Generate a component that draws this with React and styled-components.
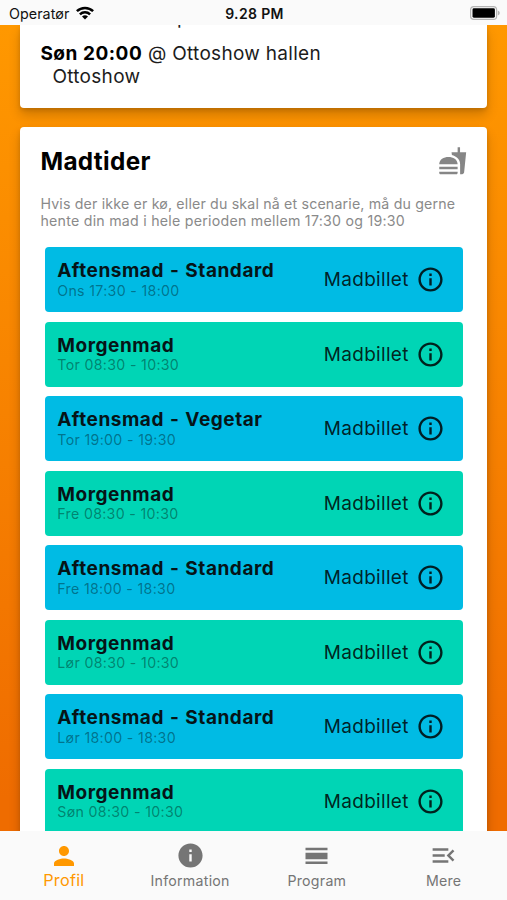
import React from 'react';
import styled, { createGlobalStyle } from 'styled-components';
import { MdInfoOutline, MdPerson, MdInfo, MdMenuOpen } from 'react-icons/md';

const GlobalStyle = createGlobalStyle`
  * { box-sizing: border-box; }
  body { margin: 0; overflow: hidden; font-family: Inter, "Liberation Sans", sans-serif; }
`;

const Screen = styled.div`
  display: flex;
  flex-direction: column;
  width: 507px;
  height: 900px;
  overflow: hidden;
  background: #fafafa;
`;

const StatusBar = styled.header`
  display: grid;
  grid-template-columns: 1fr auto 1fr;
  align-items: center;
  flex: none;
  height: 25px;
  padding: 3px 7px 0 9px;
  color: #111;
  font-size: 14.3px;
  line-height: 20px;
`;

const Carrier = styled.div`
  display: flex;
  align-items: center;
  gap: 7px;
  letter-spacing: 0.05px;
`;

const Clock = styled.div`
  font-weight: 600;
  font-size: 14px;
  letter-spacing: 0.35px;
`;

const StatusIcon = styled.svg`
  display: block;
  justify-self: end;
  margin-top: -2px;
`;

const Content = styled.main`
  flex: none;
  height: 806px;
  overflow: hidden;
  padding: 0 19.6px 0 20.4px;
  background: linear-gradient(#ff9800, #ef6c00 96%);
`;

const Card = styled.section`
  background: #fff;
  border-radius: 4px;
  box-shadow: 0 7px 12px rgba(0, 0, 0, 0.19), 0 2px 4px rgba(0, 0, 0, 0.12);
  padding: 0 20px;
`;

const ShowCard = styled(Card)`
  display: flow-root;
  height: 82.5px;
  border-radius: 0 0 4px 4px;
  margin-bottom: 19.1px;
  font-size: 19px;
  line-height: 23px;
  color: #1c1c1c;
`;

const ClippedLine = styled.div`
  height: 17px;
  padding-left: 136.5px;
  line-height: 17px;
  margin-top: -16px;
  margin-bottom: 16px;
`;

const ShowLine = styled.div`
  letter-spacing: 0.3px;
  padding-left: ${(p) => p.$indent || 0}px;
  white-space: nowrap;
`;

const Strong = styled.b`
  font-weight: 700;
  color: #000;
  letter-spacing: 0.52px;
`;

const MealCard = styled(Card)`
  height: 760px;
`;

const CardHeader = styled.div`
  display: flex;
  justify-content: space-between;
  align-items: center;
  height: 68.5px;
  color: #868686;
`;

const Title = styled.h2`
  margin: 0;
  color: #000;
  font-size: 24.3px;
  line-height: 30px;
  font-weight: 700;
  letter-spacing: 0.35px;
`;

const Hint = styled.p`
  margin: 0 0 18px;
  font-size: 14.2px;
  line-height: 17px;
  color: #8a8a8a;
`;

const HintLine = styled.span`
  display: block;
  white-space: nowrap;
  letter-spacing: ${(p) => p.$spacing}px;
`;

const MealList = styled.div`
  display: flex;
  flex-direction: column;
  gap: 9.5px;
  padding: 0 4px 0 4.3px;
`;

const MealRow = styled.div`
  display: flex;
  justify-content: space-between;
  align-items: center;
  height: 65px;
  padding: 0 18.7px 0 12.6px;
  border-radius: 4px;
  background: ${(p) => (p.$dinner ? '#00bbe4' : '#00d5b5')};
`;

const MealName = styled.div`
  font-size: 19px;
  line-height: 21.5px;
  font-weight: 700;
  letter-spacing: 0.55px;
  word-spacing: 0.9px;
  color: #061417;
`;

const MealTime = styled.div`
  font-size: 14.2px;
  line-height: 17px;
  letter-spacing: 0.3px;
  word-spacing: 0.1px;
  color: rgba(0, 0, 0, 0.4);
`;

const Ticket = styled.div`
  display: flex;
  align-items: center;
  gap: 7px;
  font-size: 19px;
  letter-spacing: 0.3px;
  color: rgba(0, 0, 0, 0.84);
`;

const NavBar = styled.nav`
  display: grid;
  grid-template-columns: repeat(4, 1fr);
  flex: 1;
  background: #fafafa;
`;

const NavItem = styled.div`
  display: flex;
  flex-direction: column;
  align-items: center;
  padding-top: 10px;
  padding-left: ${(p) => (p.$active ? 1 : 0)}px;
  color: ${(p) => (p.$active ? '#ff9800' : '#757575')};
`;

const NavLabel = styled.span`
  margin-top: ${(p) => (p.$active ? -1 : 1)}px;
  font-size: ${(p) => (p.$active ? 16.2 : 14.2)}px;
  line-height: 20px;
  letter-spacing: 0.25px;
`;

const FastfoodIcon = ({ size }) => (
  <svg width={size} height={size} viewBox="0 0 24 24" fill="currentColor">
    <path d="M18.06 22.99h1.66c.84 0 1.53-.64 1.63-1.46L23 5.05h-5V1h-1.97v4.05h-4.97l.3 2.34c1.71.47 3.31 1.32 4.27 2.26 1.44 1.42 2.43 2.89 2.43 5.29v8.05zM1 21.99V21h15.03v.99c0 .55-.45 1-1.01 1H2.01c-.56 0-1.01-.45-1.01-1zm15.03-7c0-8-15.03-8-15.03 0h15.03zM1.02 17h15v2h-15z" />
  </svg>
);

const DayIcon = ({ size }) => (
  <svg width={size} height={size} viewBox="0 0 29 29" fill="currentColor">
    <path d="M3.5 6.8h22v2.4h-22zM3.5 11.8h22v6.4h-22zM3.5 20.6h22V23h-22z" />
  </svg>
);

const meals = [
  ['Aftensmad - Standard', 'Ons 17:30 - 18:00', true],
  ['Morgenmad', 'Tor 08:30 - 10:30', false],
  ['Aftensmad - Vegetar', 'Tor 19:00 - 19:30', true],
  ['Morgenmad', 'Fre 08:30 - 10:30', false],
  ['Aftensmad - Standard', 'Fre 18:00 - 18:30', true],
  ['Morgenmad', 'Lør 08:30 - 10:30', false],
  ['Aftensmad - Standard', 'Lør 18:00 - 18:30', true],
  ['Morgenmad', 'Søn 08:30 - 10:30', false],
];

const tabs = [
  ['Profil', MdPerson, true],
  ['Information', MdInfo, false],
  ['Program', DayIcon, false],
  ['Mere', MdMenuOpen, false],
];

const Wifi = () => (
  <StatusIcon width="18" height="14" viewBox="0 0 18 14" fill="none" stroke="#000" strokeWidth="2.5">
    <path d="M0.9 5.2a11.6 11.6 0 0 1 16.2 0" />
    <path d="M3.9 8.4a7.4 7.4 0 0 1 10.2 0" />
    <path d="M9 13.6 6 10.6a4.3 4.3 0 0 1 6 0z" fill="#000" stroke="none" />
  </StatusIcon>
);

const Battery = () => (
  <StatusIcon width="30" height="14" viewBox="0 0 30 14">
    <rect x="0.6" y="0.6" width="26" height="12.8" rx="3.2" fill="#fafafa" stroke="#b5b5b5" strokeWidth="1.2" />
    <rect x="2.5" y="2.3" width="22.4" height="9.4" rx="1.4" fill="#000" />
    <path d="M27.8 4.6q2 .8 2 2.4t-2 2.4z" fill="#b5b5b5" />
  </StatusIcon>
);

export default function App() {
  return (
    <Screen>
      <GlobalStyle />
      <StatusBar>
        <Carrier>Operatør <Wifi /></Carrier>
        <Clock>9.28 PM</Clock>
        <Battery />
      </StatusBar>
      <Content>
        <ShowCard>
          <ClippedLine>p</ClippedLine>
          <ShowLine><Strong>Søn 20:00</Strong> @ Ottoshow hallen</ShowLine>
          <ShowLine $indent={12}>Ottoshow</ShowLine>
        </ShowCard>
        <MealCard>
          <CardHeader>
            <Title>Madtider</Title>
            <FastfoodIcon size={29.4} />
          </CardHeader>
          <Hint>
            <HintLine $spacing={0.17}>Hvis der ikke er kø, eller du skal nå et scenarie, må du gerne</HintLine>
            <HintLine $spacing={0.25}>hente din mad i hele perioden mellem 17:30 og 19:30</HintLine>
          </Hint>
          <MealList>
            {meals.map(([name, time, dinner]) => (
              <MealRow key={time} $dinner={dinner}>
                <div>
                  <MealName>{name}</MealName>
                  <MealTime>{time}</MealTime>
                </div>
                <Ticket>Madbillet <MdInfoOutline size={29} /></Ticket>
              </MealRow>
            ))}
          </MealList>
        </MealCard>
      </Content>
      <NavBar>
        {tabs.map(([label, Icon, active]) => (
          <NavItem key={label} $active={active}>
            <Icon size={active ? 30 : 29} />
            <NavLabel $active={active}>{label}</NavLabel>
          </NavItem>
        ))}
      </NavBar>
    </Screen>
  );
}
